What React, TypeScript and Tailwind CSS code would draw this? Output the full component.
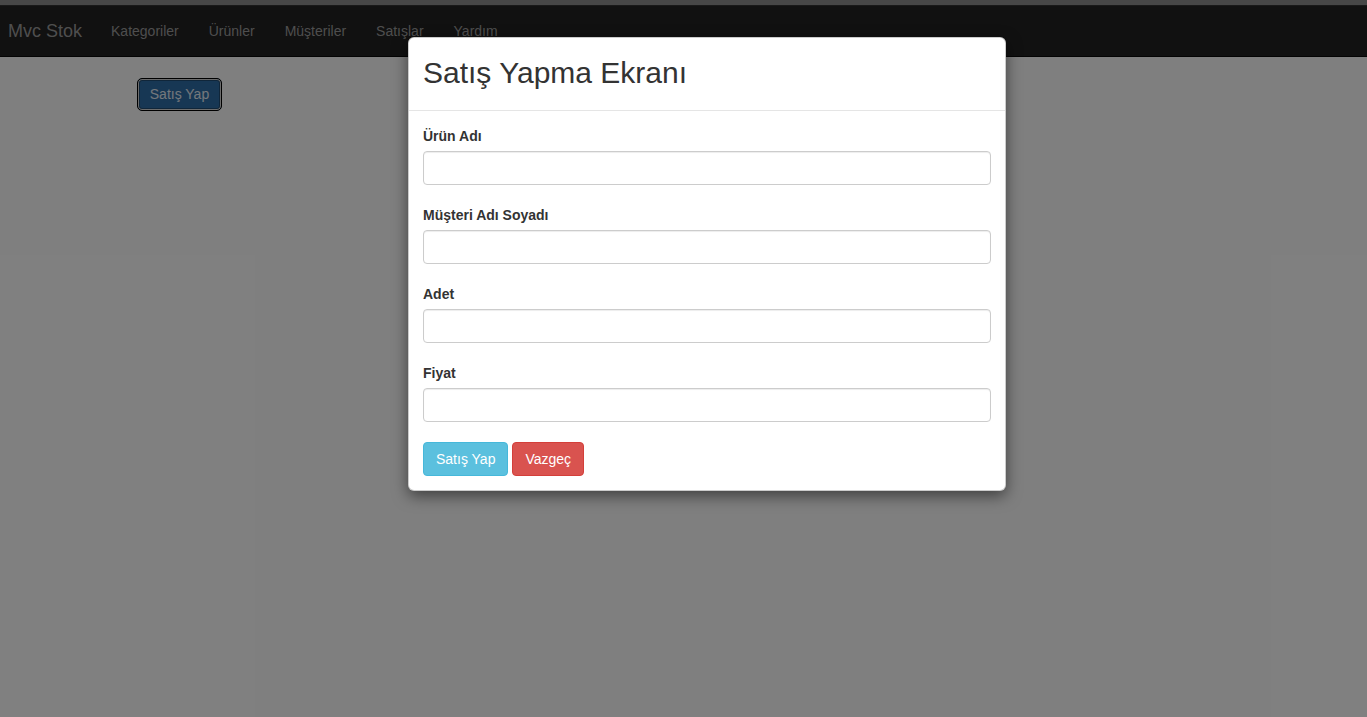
import React from "react";

const links = ["Kategoriler", "Ürünler", "Müşteriler", "Satışlar", "Yardım"];

const fields = ["Ürün Adı", "Müşteri Adı Soyadı", "Adet", "Fiyat"];

const Navbar = () => {
  return (
    <div className="h-[51px] bg-[#222222] border-b border-[#080808] flex items-center">
      <span className="pl-[8px] pr-[14px] text-[18px] text-[#9d9d9d]">Mvc Stok</span>
      {links.map((l) => (
        <span key={l} className="px-[15px] text-[14px] text-[#9d9d9d]">
          {l}
        </span>
      ))}
    </div>
  );
};

const SaleModal = () => {
  return (
    <div className="absolute left-[408px] top-[37px] w-[598px] bg-white rounded-[6px] border border-black/20 shadow-[0_5px_15px_rgba(0,0,0,0.5)]">
      <div className="h-[73px] px-[14px] pb-[3px] flex items-center border-b border-[#e5e5e5]">
        <h2 className="text-[30px] text-[#333333] leading-none">Satış Yapma Ekranı</h2>
      </div>
      <div className="px-[14px] pt-[15px] pb-[14px] flex flex-col">
        {fields.map((f) => (
          <div key={f} className="mb-[20px]">
            <label className="block font-bold text-[14px] leading-[20px] text-[#333333] mb-[5px]">{f}</label>
            <input
              type="text"
              className="block w-full h-[34px] border border-[#cccccc] rounded-[4px] shadow-[inset_0_1px_1px_rgba(0,0,0,0.075)] px-3"
            />
          </div>
        ))}
        <div className="flex gap-[4px]">
          <button className="h-[34px] px-[12px] bg-[#5bc0de] border border-[#46b8da] rounded-[4px] text-white text-[14px]">
            Satış Yap
          </button>
          <button className="h-[34px] px-[12px] bg-[#d9534f] border border-[#d43f3a] rounded-[4px] text-white text-[14px]">
            Vazgeç
          </button>
        </div>
      </div>
    </div>
  );
};

const App = () => {
  return (
    <div className="relative w-[1367px] h-[717px] overflow-hidden bg-white font-['Liberation_Sans',Arial,sans-serif]">
      <div className="h-[6px] bg-[#8e8e8e] border-b border-[#333333]" />
      <Navbar />
      <div className="pt-[21px] pl-[137px]">
        <button className="w-[85px] h-[33px] bg-[#2f6fa8] border border-black rounded-[5px] text-[#e8f0f8] text-[14px] shadow-[inset_0_0_0_1px_#d8d8d8,inset_0_0_0_2px_#204d74]">
          Satış Yap
        </button>
      </div>
      <div className="absolute inset-0 bg-black/50" />
      <SaleModal />
    </div>
  );
};

export default App;
